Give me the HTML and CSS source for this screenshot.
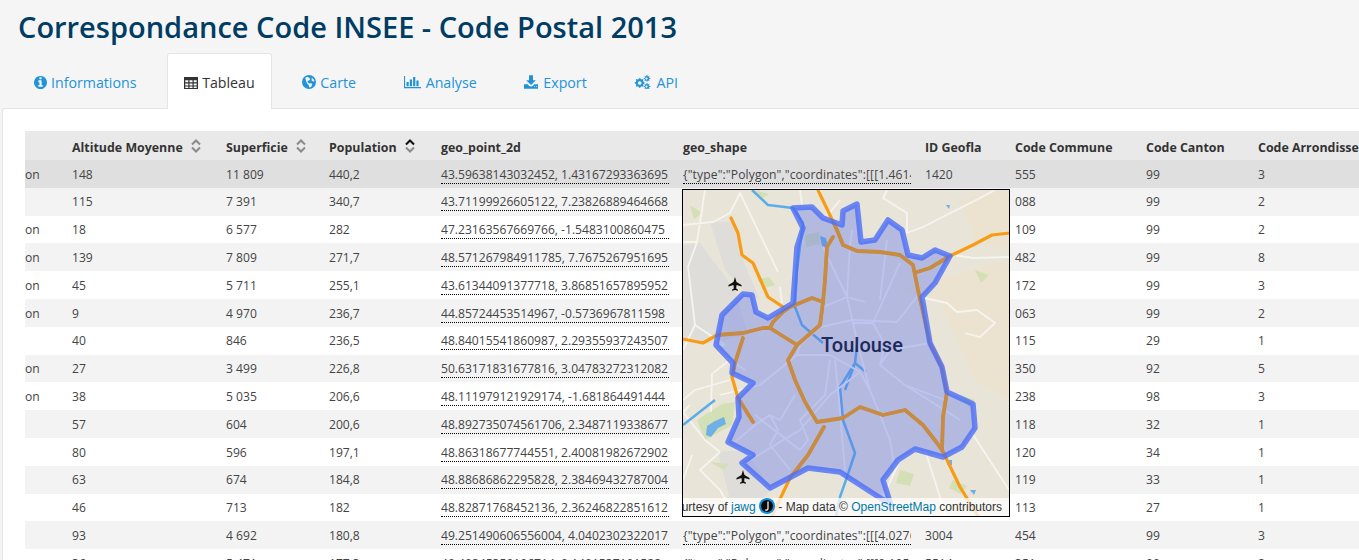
FILE: index.html
```html
<!DOCTYPE html>
<html lang="fr">
<head>
<meta charset="utf-8">
<title>Correspondance Code INSEE - Code Postal 2013</title>
<link rel="stylesheet" href="styles.css">
</head>
<body>
<h1 class="title">Correspondance Code INSEE - Code Postal 2013</h1>
<nav class="tabs">
  <a class="tab"><svg class="ico ico-info" viewBox="128 128 1536 1536"><path d="M1152 1376v-160q0-14-9-23t-23-9h-96v-512q0-14-9-23t-23-9h-320q-14 0-23 9t-9 23v160q0 14 9 23t23 9h96v320h-96q-14 0-23 9t-9 23v160q0 14 9 23t23 9h448q14 0 23-9t9-23zm-128-896v-160q0-14-9-23t-23-9h-192q-14 0-23 9t-9 23v160q0 14 9 23t23 9h192q14 0 23-9t9-23zm640 416q0 209-103 385.5t-279.5 279.5-385.5 103-385.5-103-279.5-279.5-103-385.5 103-385.5 279.5-279.5 385.5-103 385.5 103 279.5 279.5 103 385.5z"/></svg>Informations</a>
  <a class="tab tab-active"><svg class="ico" viewBox="0 0 14 14"><path fill-rule="evenodd" d="M0 1h14v12h-14zM1.300 4.300v2h3v-2zM5.500 4.300v2h3v-2zM9.700 4.300v2h3v-2zM1.300 7.400v2h3v-2zM5.500 7.400v2h3v-2zM9.700 7.400v2h3v-2zM1.300 10.400v1.500h3v-1.500zM5.500 10.400v1.500h3v-1.500zM9.700 10.400v1.500h3v-1.500z"/></svg>Tableau</a>
  <a class="tab"><svg class="ico" viewBox="0 0 14 14"><path fill-rule="evenodd" d="M7 0a7 7 0 1 0 0 14a7 7 0 0 0 0-14zM3.200 2.800l2.300-1 1.700.9 1 1.300-1 1.500-1.700.3.300 1.700 1.900 1 1.800-.2.800 1.300-1.300 2.400-1.600.5-.7-2.600-1.600-1.500-1-2.500zM9.800 2.800l1.800 1.400.9 2.100-1.300.3-1.600-1.400z"/></svg>Carte</a>
  <a class="tab tab-wide"><svg class="ico ico-wide" viewBox="0 0 17 14"><path d="M0 1h1.100v11h15.900v1.300h-17zM2.500 7h2.200v4.300h-2.200zM5.800 4.500h2.200v6.800h-2.200zM9.100 2h2.200v9.300h-2.200zM12.400 5.500h2.200v5.800h-2.200z"/></svg>Analyse</a>
  <a class="tab tab-wide"><svg class="ico" viewBox="0 0 14 14"><path fill-rule="evenodd" d="M5 .2h4v5h2.800l-4.800 4.800-4.800-4.800h2.800zM0 9.300h3.600l1.500 1.500q.8.800 1.900.8t1.900-.8l1.500-1.500h3.600v4.500h-14zM10.200 11.200h.9v.9h-.9zM12.100 11.200h.9v.9h-.9z"/></svg>Export</a>
  <a class="tab tab-wide"><svg class="ico ico-wide" viewBox="0 0 16 14"><path fill-rule="evenodd" d="M4.600 3.300l1.100-.4.500 1.100 1 .4 1.100-.5.800.9-.5 1 .4 1.100 1.100.4v1.200l-1.100.4-.4 1 .5 1.100-.9.800-1-.5-1 .4-.4 1.100h-1.200l-.4-1.100-1-.4-1.100.5-.8-.9.500-1-.4-1-1.100-.4v-1.200l1.100-.4.400-1.100-.5-1 .9-.9 1 .5 1-.4zM5.200 6.200a1.800 1.800 0 1 0 .01 0zM12.300 0l.6.100.1 1 .7.300.8-.5.500.5-.5.800.3.700 1 .1v.8l-1 .1-.3.700.5.800-.5.500-.8-.5-.7.300-.1 1h-.8l-.1-1-.7-.3-.8.500-.5-.5.5-.8-.3-.7-1-.1v-.8l1-.1.300-.7-.5-.8.500-.5.8.5.7-.3.1-1zM12 2.400a1 1 0 1 0 .01 0zM12.300 8l.6.100.1 1 .7.300.8-.5.500.5-.5.800.3.700 1 .1v.8l-1 .1-.3.700.5.800-.5.500-.8-.5-.7.300-.1 1h-.8l-.1-1-.7-.3-.8.500-.5-.5.5-.8-.3-.7-1-.1v-.8l1-.1.300-.7-.5-.8.500-.5.8.5.7-.3.1-1zM12 10.400a1 1 0 1 0 .01 0z"/></svg>API</a>
</nav>
<main class="panel">
  <div class="table-wrap">
    <table class="grid">
      <colgroup>
        <col class="c-a"><col class="c-b"><col class="c-c"><col class="c-d"><col class="c-e"><col class="c-f"><col class="c-g"><col class="c-h"><col class="c-i"><col class="c-j">
      </colgroup>
      <thead>
        <tr>
          <th></th>
          <th>Altitude Moyenne<svg class="sort" viewBox="0 0 10 14"><path d="M1 5.500l4-4 4 4M1 8.500l4 4 4-4"/></svg></th>
          <th>Superficie<svg class="sort" viewBox="0 0 10 14"><path d="M1 5.500l4-4 4 4M1 8.500l4 4 4-4"/></svg></th>
          <th>Population<svg class="sort" viewBox="0 0 10 14"><path class="sort-up" d="M1 5.500l4-4 4 4"/><path d="M1 8.500l4 4 4-4"/></svg></th>
          <th>geo_point_2d</th>
          <th>geo_shape</th>
          <th>ID Geofla</th>
          <th>Code Commune</th>
          <th>Code Canton</th>
          <th>Code Arrondissement</th>
        </tr>
      </thead>
      <tbody>
        <tr class="row-hover"><td class="first">on</td><td>148</td><td>11 809</td><td>440,2</td><td><span class="geo">43.59638143032452, 1.43167293363695</span></td><td><span class="geo geo-shape">{"type":"Polygon","coordinates":[[[1.46143</span></td><td>1420</td><td>555</td><td>99</td><td>3</td></tr>
        <tr><td class="first"></td><td>115</td><td>7 391</td><td>340,7</td><td><span class="geo">43.71199926605122, 7.23826889464668</span></td><td><span class="geo geo-shape">{"type":"Polygon","coordinates":[[[7.1945</span></td><td>6088</td><td>088</td><td>99</td><td>2</td></tr>
        <tr><td class="first">on</td><td>18</td><td>6 577</td><td>282</td><td><span class="geo">47.23163567669766, -1.5483100860475</span></td><td><span class="geo geo-shape">{"type":"Polygon","coordinates":[[[-1.518</span></td><td>4409</td><td>109</td><td>99</td><td>2</td></tr>
        <tr><td class="first">on</td><td>139</td><td>7 809</td><td>271,7</td><td><span class="geo">48.571267984911785, 7.7675267951695</span></td><td><span class="geo geo-shape">{"type":"Polygon","coordinates":[[[7.7613</span></td><td>6748</td><td>482</td><td>99</td><td>8</td></tr>
        <tr><td class="first">on</td><td>45</td><td>5 711</td><td>255,1</td><td><span class="geo">43.61344091377718, 3.86851657895952</span></td><td><span class="geo geo-shape">{"type":"Polygon","coordinates":[[[3.8074</span></td><td>3417</td><td>172</td><td>99</td><td>3</td></tr>
        <tr><td class="first">on</td><td>9</td><td>4 970</td><td>236,7</td><td><span class="geo">44.85724453514967, -0.5736967811598</span></td><td><span class="geo geo-shape">{"type":"Polygon","coordinates":[[[-0.576</span></td><td>3306</td><td>063</td><td>99</td><td>2</td></tr>
        <tr><td class="first"></td><td>40</td><td>846</td><td>236,5</td><td><span class="geo">48.84015541860987, 2.29355937243507</span></td><td><span class="geo geo-shape">{"type":"Polygon","coordinates":[[[2.2685</span></td><td>7511</td><td>115</td><td>29</td><td>1</td></tr>
        <tr><td class="first">on</td><td>27</td><td>3 499</td><td>226,8</td><td><span class="geo">50.63171831677816, 3.04783272312082</span></td><td><span class="geo geo-shape">{"type":"Polygon","coordinates":[[[3.0184</span></td><td>5935</td><td>350</td><td>92</td><td>5</td></tr>
        <tr><td class="first">on</td><td>38</td><td>5 035</td><td>206,6</td><td><span class="geo">48.111979121929174, -1.681864491444</span></td><td><span class="geo geo-shape">{"type":"Polygon","coordinates":[[[-1.624</span></td><td>3523</td><td>238</td><td>98</td><td>3</td></tr>
        <tr><td class="first"></td><td>57</td><td>604</td><td>200,6</td><td><span class="geo">48.892735074561706, 2.3487119338677</span></td><td><span class="geo geo-shape">{"type":"Polygon","coordinates":[[[2.3204</span></td><td>7518</td><td>118</td><td>32</td><td>1</td></tr>
        <tr><td class="first"></td><td>80</td><td>596</td><td>197,1</td><td><span class="geo">48.86318677744551, 2.40081982672902</span></td><td><span class="geo geo-shape">{"type":"Polygon","coordinates":[[[2.3892</span></td><td>7520</td><td>120</td><td>34</td><td>1</td></tr>
        <tr><td class="first"></td><td>63</td><td>674</td><td>184,8</td><td><span class="geo">48.88686862295828, 2.38469432787004</span></td><td><span class="geo geo-shape">{"type":"Polygon","coordinates":[[[2.3641</span></td><td>7519</td><td>119</td><td>33</td><td>1</td></tr>
        <tr><td class="first"></td><td>46</td><td>713</td><td>182</td><td><span class="geo">48.82871768452136, 2.36246822851612</span></td><td><span class="geo geo-shape">{"type":"Polygon","coordinates":[[[2.3445</span></td><td>7513</td><td>113</td><td>27</td><td>1</td></tr>
        <tr><td class="first"></td><td>93</td><td>4 692</td><td>180,8</td><td><span class="geo">49.251490606556004, 4.0402302322017</span></td><td><span class="geo geo-shape">{"type":"Polygon","coordinates":[[[4.0276</span></td><td>3004</td><td>454</td><td>99</td><td>3</td></tr>
        <tr><td class="first"></td><td>36</td><td>5 471</td><td>177,3</td><td><span class="geo">49.49845359106714, 0.1491537191522</span></td><td><span class="geo geo-shape">{"type":"Polygon","coordinates":[[[0.1051</span></td><td>5514</td><td>351</td><td>99</td><td>2</td></tr>
      </tbody>
    </table>
    <aside class="map">
      <svg class="map-art" viewBox="683 190 326 326">
        <defs>
          <clipPath id="city"><path d="M793 208L812 207L823 218L842 225L843 211L857 204L861 242L875 240L888 220L902 230L908 255L922 258L935 250L950 256L935 283L922 297L930 343L942 367L947 392L973 404L975 428L962 447L943 457L915 449L898 460L883 480L891 505L840 472L808 468L770 488L742 463L753 455L728 442L739 417L738 398L753 383L732 373L733 363L716 345L722 315L743 294L752 295L756 312L768 318L793 303L797 247L803 228z"/></clipPath>
          <g id="motos">
            <path d="M818 190L837 230L843 245L857 251L880 252L900 255L913 265L918 290L930 343L942 367L947 392L943 417L942 450L947 460L960 487L978 516"/>
            <path d="M917 272L930 268L950 256L973 245L992 235L1010 233"/>
            <path d="M833 237L827 247L825 280L823 302L820 325L797 345L788 360L795 380L805 402L817 422L843 418L860 407L883 415L905 410L923 425L937 443L942 450"/>
            <path d="M823 302L812 298L790 307L783 312L773 322L770 328L763 328L743 333L717 335L703 343L683 339M770 328L797 345"/>
            <path d="M731 218L738 233L742 255L753 263L768 297L783 307"/>
            <path d="M743 338L735 363L732 377L738 398L753 422"/>
            <path d="M824 427L808 455L790 478L772 516"/>
          </g>
        </defs>
        <rect x="683" y="190" width="326" height="326" fill="#e8e4d8"/>
        <g class="m-soft">
          <path class="m-warm" d="M900 290L1009 260V400L975 380L940 300zM960 200L1009 190V250L975 240z"/>
          <path class="m-grey" d="M683 245L700 243L735 290L748 335L700 345L683 335zM710 222H735L745 265L760 300L745 292L725 270z"/>
          <path class="m-grey" d="M718 452L745 450L772 490L760 500H730z"/>
          <path class="m-green" d="M697 420L722 404L735 402L732 425L705 440z"/>
          <path class="m-green" d="M757 280l12-3 6 8-10 3zM900 470l14 4-4 12-14-3zM953 480l14 6-6 8-12-6zM805 235l14-3 1 12-14 3zM960 395l15 5-6 8zM710 462l18 2-4 6zM975 270l14 5-8 8zM690 205l12 8-8 6zM755 190l14 4-8 5z"/>
          <path class="m-lake" d="M707 426l8-5 9-4 2 7-8 4-7 9-5-2z"/>
          <path class="m-lake" d="M820 236l6 2 2 10-6-2zM946 205l4 0-1 4zM947 460l5 0 0 5-5 0zM970 490l6 0-2 5z"/>
          <path class="m-road" d="M683 225L713 222L730 213L740 193L778 272M683 242L697 242L705 190M697 242L688 267L695 325L683 350M695 325L725 345L716 345M887 190L883 198L907 213L907 233L923 227L980 198L995 190M820 190L828 215L840 200M920 297L947 303L957 312L977 310L995 323L980 337L965 333M953 255L973 258L1009 257M780 287L782 303M690 405L683 412L705 440L720 452M712 373L711 412M713 373L730 360L745 370M720 452L700 470L720 490M800 190L802 205M925 450L940 497L945 516M970 430L1009 490M883 497L900 460M730 380L695 390L683 400M692 455L683 480M840 497L835 516M720 490L735 516"/>
          <path class="m-river" d="M752 190L768 205L793 208L803 223L797 270L795 307L802 325L823 343M855 363L840 387L843 420L855 453L847 477L840 497L836 516M857 345L855 363L866 372M855 363L845 390M683 425L715 400"/>
          <path class="m-road" d="M823 247L847 297L853 323L873 323L900 263M823 307L847 297L865 302M820 327L853 320L897 322L920 293M873 323L885 345L880 365L905 385L945 400M853 323L858 345L870 390L890 440L895 470M820 327L800 345L797 355L760 385L720 395M797 355L830 355L860 372L870 390M860 372L830 395L800 430L742 465M830 360L825 395L800 420L808 440L800 450M835 360L838 390L845 470M795 395L780 420L770 415L755 425L735 442M770 415L778 430L770 445L790 470M905 385L960 420M930 343L890 350L880 365M887 240L880 300M847 297L850 245L852 230M755 415L800 450"/>
          <use class="m-moto" href="#motos"/>
        </g>
        <path class="m-fill" d="M793 208L812 207L823 218L842 225L843 211L857 204L861 242L875 240L888 220L902 230L908 255L922 258L935 250L950 256L935 283L922 297L930 343L942 367L947 392L973 404L975 428L962 447L943 457L915 449L898 460L883 480L891 505L840 472L808 468L770 488L742 463L753 455L728 442L739 417L738 398L753 383L732 373L733 363L716 345L722 315L743 294L752 295L756 312L768 318L793 303L797 247L803 228z"/>
        <g clip-path="url(#city)"><use class="m-moto-in" href="#motos"/></g>
        <path class="m-line" d="M793 208L812 207L823 218L842 225L843 211L857 204L861 242L875 240L888 220L902 230L908 255L922 258L935 250L950 256L935 283L922 297L930 343L942 367L947 392L973 404L975 428L962 447L943 457L915 449L898 460L883 480L891 505L840 472L808 468L770 488L742 463L753 455L728 442L739 417L738 398L753 383L732 373L733 363L716 345L722 315L743 294L752 295L756 312L768 318L793 303L797 247L803 228z"/>
        <path class="m-plane" d="M735 277l1.500 5 5 3v1.500l-5-1.500-.3 3.500 1.800 1.300v1l-3-.7-3 .7v-1l1.800-1.300-.3-3.500-5 1.500v-1.500l5-3z"/>
        <path class="m-plane" d="M743 470l1.500 5 5 3v1.500l-5-1.500-.3 3.500 1.800 1.300v1l-3-.7-3 .7v-1l1.800-1.300-.3-3.500-5 1.500v-1.500l5-3z"/>
      </svg>
      <span class="map-label">Toulouse</span>
      <div class="attrib"><span class="attrib-text">Tiles courtesy of <a>jawg</a> <svg class="jawg" viewBox="0 0 16 16"><circle cx="8" cy="8" r="8" fill="#0f8fe0"/><circle cx="8" cy="8" r="6" fill="#0a0a0a"/><path d="M9 3.500v7q0 2-3 1.500" fill="none" stroke="#fff" stroke-width="1.200"/></svg> - Map data © <a>OpenStreetMap</a> contributors</span></div>
    </aside>
  </div>
</main>
</body>
</html>
```
FILE: styles.css
```css
html, body {
  margin: 0;
  height: 560px;
  overflow: hidden;
}
body {
  background: #f5f5f5;
  font-family: "Open Sans", sans-serif;
  color: #333;
}
.title {
  margin: 0;
  padding: 8px 0 0 18px;
  height: 45px;
  font-size: 29px;
  line-height: 38px;
  font-weight: 600;
  color: #003c64;
}
.tabs {
  display: flex;
  gap: 13.7px;
  padding-left: 17px;
  height: 55px;
  position: relative;
  z-index: 1;
}
.tab {
  display: flex;
  align-items: center;
  gap: 4px;
  padding: 2px 17px 0;
  height: 56px;
  box-sizing: border-box;
  font-size: 14.2px;
  color: #2393d8;
  border-radius: 3px 3px 0 0;
}
.tab-wide {
  gap: 5px;
}
.tab-active {
  background: #fff;
  color: #333;
  border: 1px solid #e5e5e5;
  border-bottom: 0;
  padding: 2px 16px 0;
}
.ico {
  width: 14px;
  height: 14px;
  fill: currentColor;
  flex: none;
}
.ico-info {
  width: 13px;
  height: 13px;
}
.ico-wide {
  width: 17px;
}
.panel {
  margin-left: 2px;
  height: 452px;
  box-sizing: border-box;
  padding: 22px 0 0 22px;
  background: #fff;
  border: 1px solid #e5e5e5;
  border-right: 0;
  border-bottom: 0;
  border-radius: 3px 0 0 0;
  overflow: hidden;
}
.table-wrap {
  position: relative;
  width: 1334px;
  overflow: hidden;
}
.grid {
  table-layout: fixed;
  border-collapse: collapse;
  width: 1334px;
  font-size: 12.1px;
  color: #444;
}
.c-a { width: 39px; }
.c-b { width: 154px; }
.c-c { width: 103px; }
.c-d { width: 112px; }
.c-e { width: 242px; }
.c-f { width: 242px; }
.c-g { width: 90px; }
.c-h { width: 131px; }
.c-i { width: 112px; }
.c-j { width: 109px; }
.grid th {
  background: #e9e9e9;
  text-align: left;
  height: 29px;
  box-sizing: border-box;
  padding: 3px 0 0 8px;
  font-size: 12.4px;
  font-weight: 700;
  white-space: nowrap;
  overflow: hidden;
  color: #333;
}
.grid td {
  height: 27.8px;
  box-sizing: border-box;
  padding: .5px 0 0 8px;
  white-space: nowrap;
  overflow: hidden;
}
.grid td.first {
  padding-left: 0;
}
.grid tbody tr:nth-child(even) {
  background: #f3f3f3;
}
.grid tbody tr.row-hover {
  background: #dfdfdf;
}
.geo {
  display: inline-block;
  vertical-align: middle;
  width: 228px;
  overflow: hidden;
  border-bottom: 1px dotted #000;
  line-height: 17px;
}
.geo-shape {
  letter-spacing: .12px;
}
.sort {
  width: 10px;
  height: 14px;
  margin-left: 8px;
  vertical-align: -1px;
  fill: none;
  stroke: #8a8a8a;
  stroke-width: 2;
}
.sort-up {
  stroke: #111;
}
.map {
  position: absolute;
  left: 657px;
  top: 58px;
  width: 326px;
  height: 326px;
  background: #e8e4d8;
  border: 1px solid #000;
  overflow: hidden;
}
.map-art {
  display: block;
  width: 326px;
  height: 326px;
}
.m-soft { filter: blur(.35px); }
.m-warm { fill: #ebe2cf; }
.m-grey { fill: #deddd9; }
.m-green { fill: #d3dfb5; }
.m-lake { fill: #6fb0e6; }
.m-road { fill: none; stroke: #f6f4ef; stroke-width: 1.800; stroke-linejoin: round; }
.m-river { fill: none; stroke: #5aaee8; stroke-width: 2.500; stroke-linejoin: round; }
.m-moto { fill: none; stroke: #f89c16; stroke-width: 3.200; stroke-linejoin: round; stroke-linecap: round; }
.m-moto-in { fill: none; stroke: #c78b42; stroke-width: 3.800; stroke-linejoin: round; stroke-linecap: round; }
.m-fill { fill: rgba(90, 110, 235, .36); }
.m-line { fill: none; stroke: rgba(75, 110, 248, .8); stroke-width: 5.500; stroke-linejoin: round; }
.m-plane { fill: #111; }
.map-label {
  position: absolute;
  left: 138px;
  top: 143px;
  font-family: Roboto, sans-serif;
  font-size: 20px;
  font-weight: 500;
  line-height: 24px;
  color: #1f2a5c;
}
.attrib {
  position: absolute;
  right: 0;
  bottom: 0;
  left: 0;
  height: 18px;
  background: rgba(255, 255, 255, .75);
  overflow: hidden;
}
.attrib-text {
  position: absolute;
  right: 7px;
  top: 0;
  font-family: "Liberation Sans", Arial, sans-serif;
  font-size: 12px;
  line-height: 18px;
  white-space: nowrap;
  color: #333;
}
.attrib-text a { color: #0078a8; }
.jawg {
  width: 16px;
  height: 16px;
  vertical-align: -3px;
}
```
